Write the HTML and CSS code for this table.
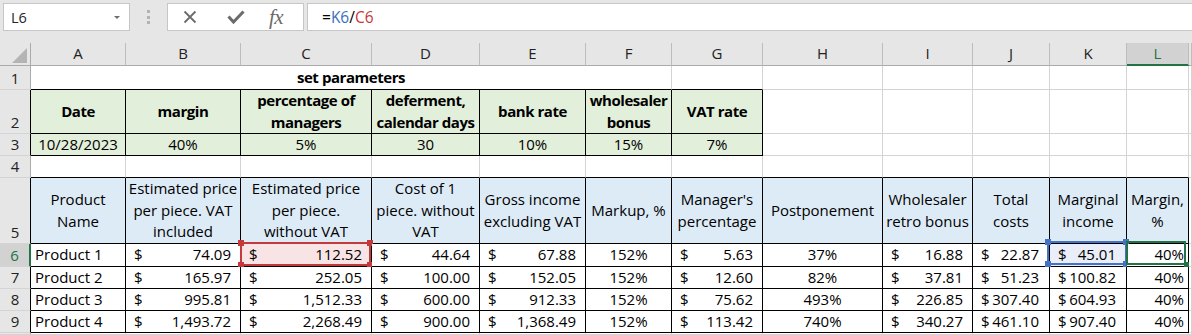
FILE: index.html
```html
<!DOCTYPE html>
<html>
<head>
<meta charset="utf-8">
<link rel="stylesheet" href="styles.css">
</head>
<body>
<div class="toolbar">
  <div class="namebox"><span>L6</span><span class="caret"></span></div>
  <div class="grip"><i></i><i></i><i></i></div>
  <div class="fnbox">
    <svg class="ico-x" width="14" height="14" viewBox="0 0 14 14"><path d="M1.5 1.5 L12.5 12.5 M12.5 1.5 L1.5 12.5" stroke="#6b6b6b" stroke-width="1.8" fill="none"/></svg>
    <svg class="ico-check" width="18" height="14" viewBox="0 0 18 14"><path d="M1.5 6.5 L6.5 12 L16.5 1.5" stroke="#6b6b6b" stroke-width="3" fill="none" stroke-linejoin="miter"/></svg>
    <span class="fx">fx</span>
  </div>
  <div class="formula">=<span class="ref-k">K6</span>/<span class="ref-c">C6</span></div>
</div>

<div class="sheet">
  <!-- column headers -->
  <div class="c ch corner"><span class="tri"></span></div>
  <div class="c ch">A</div>
  <div class="c ch">B</div>
  <div class="c ch">C</div>
  <div class="c ch">D</div>
  <div class="c ch">E</div>
  <div class="c ch">F</div>
  <div class="c ch">G</div>
  <div class="c ch">H</div>
  <div class="c ch">I</div>
  <div class="c ch">J</div>
  <div class="c ch">K</div>
  <div class="c ch sel">L</div>
  <div class="c ch"></div>

  <!-- row 1 -->
  <div class="c rh">1</div>
  <div class="c kb ctr bold span6">set parameters</div>
  <div class="c kb"></div>
  <div class="c"></div><div class="c"></div><div class="c"></div><div class="c"></div><div class="c"></div>
  <div class="c"></div>

  <!-- row 2 -->
  <div class="c rh kr">2</div>
  <div class="c k gf ctr bold"><span>Date</span></div>
  <div class="c k gf ctr bold"><span>margin</span></div>
  <div class="c k gf ctr bold"><span>percentage of<br>managers</span></div>
  <div class="c k gf ctr bold"><span>deferment,<br>calendar days</span></div>
  <div class="c k gf ctr bold"><span>bank rate</span></div>
  <div class="c k gf ctr bold"><span>wholesaler<br>bonus</span></div>
  <div class="c k gf ctr bold"><span>VAT rate</span></div>
  <div class="c"></div><div class="c"></div><div class="c"></div><div class="c"></div><div class="c"></div>
  <div class="c"></div>

  <!-- row 3 -->
  <div class="c rh kr">3</div>
  <div class="c k gf ctr">10/28/2023</div>
  <div class="c k gf ctr">40%</div>
  <div class="c k gf ctr">5%</div>
  <div class="c k gf ctr">30</div>
  <div class="c k gf ctr">10%</div>
  <div class="c k gf ctr">15%</div>
  <div class="c k gf ctr">7%</div>
  <div class="c"></div><div class="c"></div><div class="c"></div><div class="c"></div><div class="c"></div>
  <div class="c"></div>

  <!-- row 4 -->
  <div class="c rh">4</div>
  <div class="c kb"></div><div class="c kb"></div><div class="c kb"></div><div class="c kb"></div>
  <div class="c kb"></div><div class="c kb"></div><div class="c kb"></div><div class="c kb"></div>
  <div class="c kb"></div><div class="c kb"></div><div class="c kb"></div><div class="c kb"></div>
  <div class="c"></div>

  <!-- row 5 -->
  <div class="c rh kr">5</div>
  <div class="c k bf ctr"><span>Product<br>Name</span></div>
  <div class="c k bf ctr"><span>Estimated price<br>per piece. VAT<br>included</span></div>
  <div class="c k bf ctr"><span>Estimated price<br>per piece.<br>without VAT</span></div>
  <div class="c k bf ctr"><span>Cost of 1<br>piece. without<br>VAT</span></div>
  <div class="c k bf ctr"><span>Gross income<br>excluding VAT</span></div>
  <div class="c k bf ctr"><span>Markup, %</span></div>
  <div class="c k bf ctr"><span>Manager's<br>percentage</span></div>
  <div class="c k bf ctr"><span>Postponement</span></div>
  <div class="c k bf ctr"><span>Wholesaler<br>retro bonus</span></div>
  <div class="c k bf ctr"><span>Total<br>costs</span></div>
  <div class="c k bf ctr"><span>Marginal<br>income</span></div>
  <div class="c k bf ctr"><span>Margin,<br>%</span></div>
  <div class="c"></div>

  <!-- row 6 -->
  <div class="c rh sel">6</div>
  <div class="c k pl">Product 1</div>
  <div class="c k acc"><span>$</span><span>74.09</span></div>
  <div class="c k acc redfill"><span>$</span><span>112.52</span><span class="selbox red"><i class="tl"></i><i class="tr"></i><i class="bl"></i><i class="br"></i></span></div>
  <div class="c k acc"><span>$</span><span>44.64</span></div>
  <div class="c k acc"><span>$</span><span>67.88</span></div>
  <div class="c k ctr">152%</div>
  <div class="c k acc"><span>$</span><span>5.63</span></div>
  <div class="c k ctr">37%</div>
  <div class="c k acc"><span>$</span><span>16.88</span></div>
  <div class="c k acc narrow"><span>$</span><span>22.87</span></div>
  <div class="c k acc narrow bluefill"><span>$</span><span>45.01</span><span class="selbox blue"><i class="tl"></i><i class="tr"></i><i class="bl"></i><i class="br"></i></span></div>
  <div class="c k pr">40%<span class="selbox green"><i class="fill"></i></span></div>
  <div class="c"></div>

  <!-- row 7 -->
  <div class="c rh kr">7</div>
  <div class="c k pl">Product 2</div>
  <div class="c k acc"><span>$</span><span>165.97</span></div>
  <div class="c k acc"><span>$</span><span>252.05</span></div>
  <div class="c k acc"><span>$</span><span>100.00</span></div>
  <div class="c k acc"><span>$</span><span>152.05</span></div>
  <div class="c k ctr">152%</div>
  <div class="c k acc"><span>$</span><span>12.60</span></div>
  <div class="c k ctr">82%</div>
  <div class="c k acc"><span>$</span><span>37.81</span></div>
  <div class="c k acc narrow"><span>$</span><span>51.23</span></div>
  <div class="c k acc narrow"><span>$</span><span>100.82</span></div>
  <div class="c k pr">40%</div>
  <div class="c"></div>

  <!-- row 8 -->
  <div class="c rh kr">8</div>
  <div class="c k pl">Product 3</div>
  <div class="c k acc"><span>$</span><span>995.81</span></div>
  <div class="c k acc"><span>$</span><span>1,512.33</span></div>
  <div class="c k acc"><span>$</span><span>600.00</span></div>
  <div class="c k acc"><span>$</span><span>912.33</span></div>
  <div class="c k ctr">152%</div>
  <div class="c k acc"><span>$</span><span>75.62</span></div>
  <div class="c k ctr">493%</div>
  <div class="c k acc"><span>$</span><span>226.85</span></div>
  <div class="c k acc narrow"><span>$</span><span>307.40</span></div>
  <div class="c k acc narrow"><span>$</span><span>604.93</span></div>
  <div class="c k pr">40%</div>
  <div class="c"></div>

  <!-- row 9 -->
  <div class="c rh kr">9</div>
  <div class="c k pl">Product 4</div>
  <div class="c k acc"><span>$</span><span>1,493.72</span></div>
  <div class="c k acc"><span>$</span><span>2,268.49</span></div>
  <div class="c k acc"><span>$</span><span>900.00</span></div>
  <div class="c k acc"><span>$</span><span>1,368.49</span></div>
  <div class="c k ctr">152%</div>
  <div class="c k acc"><span>$</span><span>113.42</span></div>
  <div class="c k ctr">740%</div>
  <div class="c k acc"><span>$</span><span>340.27</span></div>
  <div class="c k acc narrow"><span>$</span><span>461.10</span></div>
  <div class="c k acc narrow"><span>$</span><span>907.40</span></div>
  <div class="c k pr">40%</div>
  <div class="c"></div>

  <!-- row 10 (partial) -->
  <div class="c rh"></div>
  <div class="c"></div><div class="c"></div><div class="c"></div><div class="c"></div>
  <div class="c"></div><div class="c"></div><div class="c"></div><div class="c"></div>
  <div class="c"></div><div class="c"></div><div class="c"></div><div class="c"></div>
  <div class="c"></div>
</div>
</body>
</html>
```

FILE: styles.css
```css
html, body {
  margin: 0;
  padding: 0;
}
body {
  width: 1192px;
  height: 335px;
  overflow: hidden;
  background: #e6e6e6;
  font-family: "Open Sans", "Liberation Sans", sans-serif;
  color: #000;
}

/* ---------- formula bar ---------- */
.toolbar {
  display: flex;
  align-items: flex-start;
  height: 43px;
  box-sizing: border-box;
  padding: 3px 0 0 3px;
}
.namebox {
  width: 127px;
  height: 28px;
  box-sizing: border-box;
  border: 1px solid #c6c6c6;
  background: #fff;
  display: flex;
  align-items: center;
  justify-content: space-between;
  padding: 0 9px 0 7px;
  font-size: 14.5px;
  color: #262626;
}
.caret {
  width: 0;
  height: 0;
  border-left: 3.5px solid transparent;
  border-right: 3.5px solid transparent;
  border-top: 3.5px solid #6e6e6e;
}
.grip {
  width: 37px;
  height: 28px;
  display: flex;
  flex-direction: column;
  align-items: center;
  justify-content: center;
  gap: 2.5px;
}
.grip i {
  display: block;
  width: 3px;
  height: 3px;
  background: #b3b3b3;
}
.fnbox {
  width: 137px;
  height: 28px;
  box-sizing: border-box;
  border: 1px solid #c6c6c6;
  background: #fff;
  display: flex;
  align-items: center;
  padding-left: 15px;
}
.ico-x { display: block; }
.ico-check { display: block; margin-left: 30px; }
.fx {
  margin-left: 24px;
  font-family: "Liberation Serif", "DejaVu Serif", serif;
  font-style: italic;
  font-size: 21px;
  line-height: 1;
  color: #6b6b6b;
  letter-spacing: -0.5px;
}
.formula {
  flex: 1;
  margin-left: 3px;
  height: 28px;
  box-sizing: border-box;
  border: 1px solid #c6c6c6;
  border-right: none;
  background: #fff;
  display: flex;
  align-items: center;
  padding-left: 14px;
  font-size: 15.5px;
  color: #000;
}
.ref-k { color: #3b6fc6; }
.ref-c { color: #c7373a; }

/* ---------- sheet grid ---------- */
.sheet {
  display: grid;
  grid-template-columns: 31px 95px 115px 131px 108px 106px 86px 91px 120px 90px 77px 77px 62px 1fr;
  grid-template-rows: 23px 24px 44px 22px 22px 66px 23px 22px 22px 22px 1fr;
  height: 292px;
  background: #fff;
}
.c {
  box-sizing: border-box;
  min-width: 0;
  border-right: 1px solid #d4d4d4;
  border-bottom: 1px solid #d4d4d4;
  background: #fff;
  display: flex;
  align-items: center;
  font-size: 15px;
  line-height: 21.6px;
  white-space: nowrap;
  position: relative;
}
.span6 { grid-column: span 6; }

.ch {
  background: #e6e6e6;
  border-right-color: #bdbdbd;
  border-bottom-color: #ababab;
  justify-content: center;
  color: #222;
}
.ch.sel {
  background: #d2d2d2;
  color: #217346;
  border-bottom: 2px solid #217346;
}
.corner {
  justify-content: flex-end;
  align-items: flex-end;
  padding: 0 3px 2px 0;
  border-right-color: #ababab;
}
.tri {
  display: block;
  width: 0;
  height: 0;
  border-left: 15px solid transparent;
  border-bottom: 15px solid #b4b4b4;
}
.rh {
  background: #e6e6e6;
  border-right-color: #ababab;
  border-bottom-color: #d4d4d4;
  justify-content: center;
  align-items: flex-end;
  padding-bottom: 1px;
  line-height: 20px;
  color: #222;
}
.rh.kr { border-right-color: #000; }
.rh.sel {
  background: #d2d2d2;
  color: #217346;
  border-right: 2px solid #217346;
}

.k { border-right-color: #000; border-bottom-color: #000; }
.kb { border-bottom-color: #000; }
.gf { background: #e2efda; }
.bf { background: #ddebf7; }
.ctr { justify-content: center; text-align: center; }
.bold { font-weight: 700; letter-spacing: -0.45px; }
.acc { justify-content: space-between; padding: 0 9px 0 8px; }
.acc.narrow { padding-right: 10px; }
.pr { justify-content: flex-end; padding-right: 4px; }
.pl { padding-left: 4px; }
.redfill { background: #f8e4e4; }
.bluefill { background: #e9eef8; }

/* ---------- selection overlays ---------- */
.selbox {
  position: absolute;
  box-sizing: border-box;
  border: 2px solid;
  pointer-events: none;
}
.selbox i {
  position: absolute;
  width: 6px;
  height: 6px;
}
.selbox .tl { left: -4px; top: -4px; }
.selbox .tr { right: -4px; top: -4px; }
.selbox .bl { left: -4px; bottom: -4px; }
.selbox .br { right: -4px; bottom: -4px; }
.red { left: -1px; top: -2px; right: 0; bottom: 0; border-color: #c3393c; }
.red i { background: #c3393c; }
.blue { left: -3px; top: -3px; right: -1px; bottom: 1px; border-color: #4472c4; }
.blue i { background: #4472c4; }
.green { left: -1px; top: -3px; right: 2px; bottom: 1px; border-color: #217346; }
.green .fill {
  width: 5px;
  height: 5px;
  right: -5px;
  bottom: -4px;
  background: #217346;
}
```
